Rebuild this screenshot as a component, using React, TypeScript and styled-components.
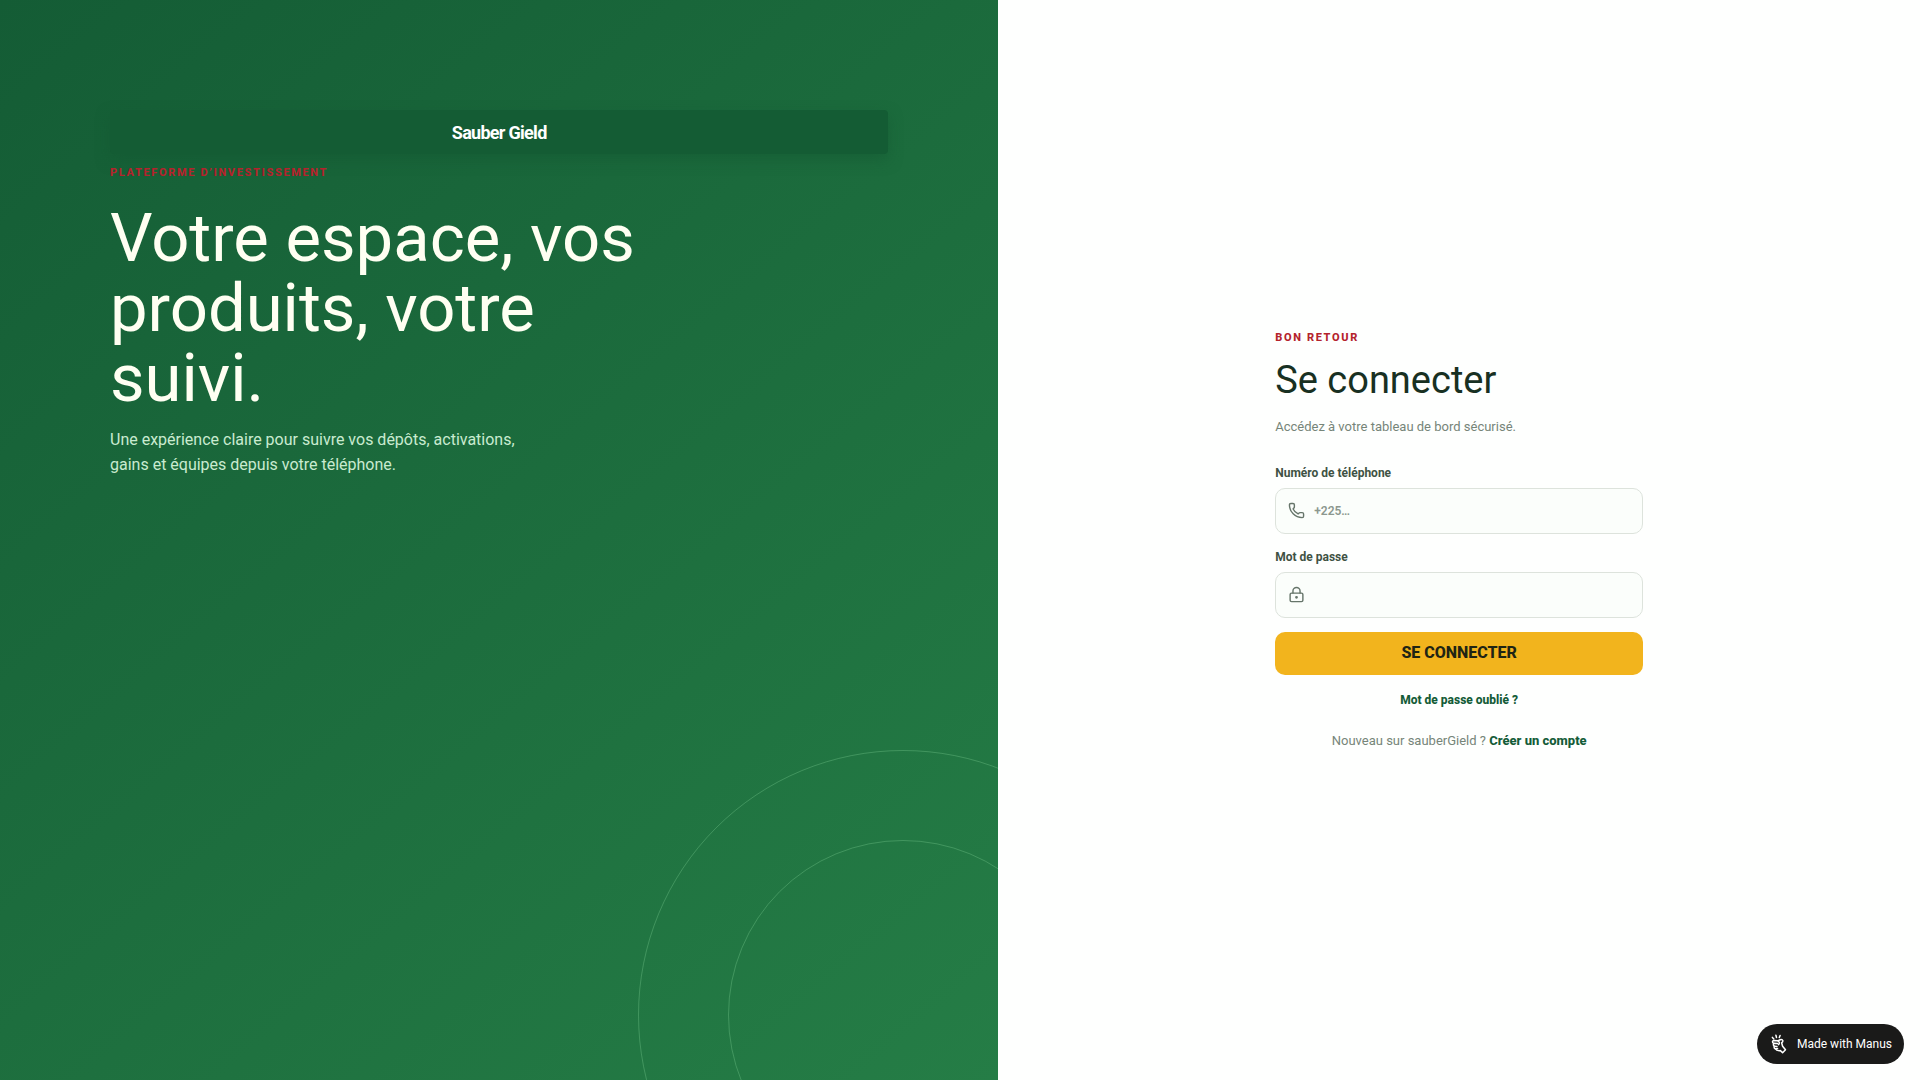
import React from "react";
import styled, { createGlobalStyle } from "styled-components";
import { LockKeyhole, Phone } from "lucide-react";

const GlobalStyle = createGlobalStyle`
  *, *::before, *::after { box-sizing: border-box; }
  body { margin: 0; background: #fefffe; font-family: Roboto, "Liberation Sans", sans-serif; }
  h1, h2, p { margin: 0; }
`;

const Page = styled.div`
  display: grid;
  grid-template-columns: 52fr 48fr;
  min-height: 100vh;
  @media (max-width: 800px) { grid-template-columns: 1fr; }
`;

const Hero = styled.section`
  position: relative;
  overflow: hidden;
  padding: 110px;
  background: linear-gradient(140deg, #145c35, #1f7240 66%, #257d46);
  color: #fffff2;
`;

const Rings = styled.div`
  position: absolute;
  right: -170px;
  bottom: -200px;
  width: 530px;
  height: 530px;
  border: 1px solid rgba(138, 220, 160, 0.3);
  border-radius: 50%;
  &::after {
    content: "";
    position: absolute;
    inset: 89px;
    border: 1px solid rgba(138, 220, 160, 0.3);
    border-radius: 50%;
  }
`;

const Brand = styled.div`
  display: flex;
  align-items: center;
  justify-content: center;
  height: 44px;
  border-radius: 4px;
  background: #145c34;
  box-shadow: 0 6px 14px rgba(20, 88, 50, 0.5);
  color: #ffffff;
  font-size: 18px;
  font-weight: 700;
  letter-spacing: -0.04em;
`;

const Eyebrow = styled.p`
  color: #b4232c;
  font-size: 11px;
  line-height: 16px;
  font-weight: 800;
  letter-spacing: 0.15em;
  text-transform: uppercase;
`;

const HeroCopy = styled.div`
  padding-top: 11px;
`;

const HeroTitle = styled.h1`
  max-width: 560px;
  margin-top: 22px;
  font-size: 67px;
  line-height: 70px;
  font-weight: 400;
`;

const HeroText = styled.p`
  max-width: 430px;
  margin-top: 14px;
  color: #c9ebd0;
  font-size: 16px;
  line-height: 25px;
`;

const Main = styled.main`
  display: flex;
  align-items: center;
  justify-content: center;
  padding: 24px;
`;

const Form = styled.form`
  display: flex;
  flex-direction: column;
  width: 100%;
  max-width: 368px;
`;

const Title = styled.h2`
  margin-top: 11px;
  color: #183022;
  font-size: 38px;
  line-height: 46px;
  font-weight: 400;
`;

const Intro = styled.p`
  margin: 14px 0 28px;
  color: #768579;
  font-size: 13px;
  line-height: 20px;
`;

const Field = styled.div`
  display: flex;
  flex-direction: column;
  gap: 7px;
  & + & { margin-top: 15px; }
`;

const Label = styled.label`
  color: #3f5244;
  font-size: 12px;
  line-height: 16px;
  font-weight: 700;
`;

const InputBox = styled.div`
  display: flex;
  align-items: center;
  gap: 9px;
  height: 46px;
  padding: 0 12px;
  border: 1px solid #dde3dc;
  border-radius: 10px;
  background: #fbfefb;
  color: #66756a;
`;

const Input = styled.input`
  flex: 1;
  min-width: 0;
  padding: 0;
  border: 0;
  outline: 0;
  background: transparent;
  color: #183022;
  font: 600 12px/16px Roboto, "Liberation Sans", sans-serif;
  &::placeholder { color: #8c988f; opacity: 1; }
`;

const Submit = styled.button`
  height: 43px;
  margin-top: 14px;
  padding: 0 16px;
  border: 0;
  border-radius: 10px;
  background: #f2b41d;
  color: #202414;
  font: 800 16px/20px Roboto, "Liberation Sans", sans-serif;
  text-transform: uppercase;
  cursor: pointer;
`;

const Link = styled.a`
  color: #145c38;
  font-weight: 800;
  text-decoration: none;
`;

const Forgot = styled(Link)`
  align-self: center;
  margin-top: 17px;
  font-size: 12px;
  line-height: 16px;
`;

const Signup = styled.p`
  margin-top: 23px;
  color: #768579;
  font-size: 13px;
  line-height: 20px;
  text-align: center;
`;

const Badge = styled.a`
  position: fixed;
  right: 16px;
  bottom: 16px;
  display: flex;
  align-items: center;
  gap: 8px;
  height: 40px;
  padding: 0 12px;
  border-radius: 20px;
  background: #1a1a19;
  color: #ffffff;
  font-size: 12px;
  line-height: 16px;
  text-decoration: none;
`;

function ManusMark() {
  return (
    <svg width="20" height="20" viewBox="0 0 20 20" fill="none" stroke="currentColor" strokeWidth="1.5" strokeLinecap="round" strokeLinejoin="round" aria-hidden="true">
      <path d="M3.4 3.4 4.8 4.9M6.9 1.2 7.5 3.5M11.1 1.5 10.3 3.6" />
      <path d="M4.6 9.2C3 8.6 3.1 6.4 5 6.4L9 6.7 11.2 5.8C13 5.1 14.6 6.4 13.6 7.9L12.6 8.8 13.6 12.2 16.5 15.8 13.6 18.7 11.4 16.6C8.8 16.9 7 16.2 6.4 14.8 5 14.3 4.8 13.2 5.5 12.3 4.2 11.6 3.9 10 5.1 9.3L8.6 9.6" />
      <path d="M5.5 12.3 8 12.4M6.4 14.8 8.6 14.6M9 6.9C10.8 8 10.8 9.8 9.4 10.6" />
    </svg>
  );
}

export default function App() {
  return (
    <>
      <GlobalStyle />
      <Page>
        <Hero>
          <Rings />
          <Brand>Sauber Gield</Brand>
          <HeroCopy>
            <Eyebrow>Plateforme d’investissement</Eyebrow>
            <HeroTitle>Votre espace, vos produits, votre suivi.</HeroTitle>
            <HeroText>
              Une expérience claire pour suivre vos dépôts, activations, gains et équipes depuis votre téléphone.
            </HeroText>
          </HeroCopy>
        </Hero>
        <Main>
          <Form onSubmit={(e) => e.preventDefault()}>
            <Eyebrow>Bon retour</Eyebrow>
            <Title>Se connecter</Title>
            <Intro>Accédez à votre tableau de bord sécurisé.</Intro>
            <Field>
              <Label htmlFor="phone">Numéro de téléphone</Label>
              <InputBox>
                <Phone size={17} aria-hidden="true" />
                <Input id="phone" type="tel" placeholder="+225…" />
              </InputBox>
            </Field>
            <Field>
              <Label htmlFor="password">Mot de passe</Label>
              <InputBox>
                <LockKeyhole size={17} aria-hidden="true" />
                <Input id="password" type="password" />
              </InputBox>
            </Field>
            <Submit type="submit">Se connecter</Submit>
            <Forgot href="#forgot">Mot de passe oublié ?</Forgot>
            <Signup>
              Nouveau sur sauberGield ? <Link href="#signup">Créer un compte</Link>
            </Signup>
          </Form>
        </Main>
      </Page>
      <Badge href="#manus">
        <ManusMark />
        Made with Manus
      </Badge>
    </>
  );
}
